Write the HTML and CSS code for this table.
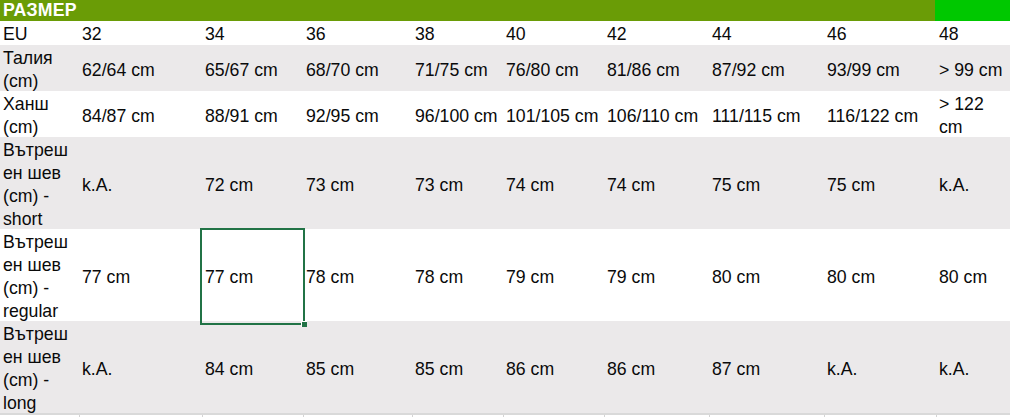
FILE: index.html
```html
<!DOCTYPE html>
<html lang="bg">
<head>
<meta charset="utf-8">
<title>Размер</title>
<link rel="stylesheet" href="styles.css">
</head>
<body>
<div class="sheet">
  <div class="row head">
    <div class="hcell title">РАЗМЕР</div>
    <div class="hcell accent"></div>
  </div>
  <div class="row eu">
    <div class="cell">EU</div><div class="cell">32</div><div class="cell">34</div><div class="cell">36</div><div class="cell">38</div><div class="cell">40</div><div class="cell">42</div><div class="cell">44</div><div class="cell">46</div><div class="cell">48</div>
  </div>
  <div class="row grey two">
    <div class="cell">Талия<br>(cm)</div><div class="cell">62/64 cm</div><div class="cell">65/67 cm</div><div class="cell">68/70 cm</div><div class="cell">71/75 cm</div><div class="cell">76/80 cm</div><div class="cell">81/86 cm</div><div class="cell">87/92 cm</div><div class="cell">93/99 cm</div><div class="cell">&gt; 99 cm</div>
  </div>
  <div class="row two">
    <div class="cell">Ханш<br>(cm)</div><div class="cell">84/87 cm</div><div class="cell">88/91 cm</div><div class="cell">92/95 cm</div><div class="cell">96/100 cm</div><div class="cell">101/105 cm</div><div class="cell">106/110 cm</div><div class="cell">111/115 cm</div><div class="cell">116/122 cm</div><div class="cell">&gt; 122<br>cm</div>
  </div>
  <div class="row grey four">
    <div class="cell">Вътреш<br>ен шев<br>(cm) -<br>short</div><div class="cell">k.A.</div><div class="cell">72 cm</div><div class="cell">73 cm</div><div class="cell">73 cm</div><div class="cell">74 cm</div><div class="cell">74 cm</div><div class="cell">75 cm</div><div class="cell">75 cm</div><div class="cell">k.A.</div>
  </div>
  <div class="row four">
    <div class="cell">Вътреш<br>ен шев<br>(cm) -<br>regular</div><div class="cell">77 cm</div><div class="cell selected">77 cm</div><div class="cell">78 cm</div><div class="cell">78 cm</div><div class="cell">79 cm</div><div class="cell">79 cm</div><div class="cell">80 cm</div><div class="cell">80 cm</div><div class="cell">80 cm</div>
  </div>
  <div class="row grey four last">
    <div class="cell">Вътреш<br>ен шев<br>(cm) -<br>long</div><div class="cell">k.A.</div><div class="cell">84 cm</div><div class="cell">85 cm</div><div class="cell">85 cm</div><div class="cell">86 cm</div><div class="cell">86 cm</div><div class="cell">87 cm</div><div class="cell">k.A.</div><div class="cell">k.A.</div>
  </div>
  <div class="row tail">
    <div class="gcell"></div><div class="gcell"></div><div class="gcell"></div><div class="gcell"></div><div class="gcell"></div><div class="gcell"></div><div class="gcell"></div><div class="gcell"></div><div class="gcell"></div><div class="gcell"></div>
  </div>
</div>
</body>
</html>
```

FILE: styles.css
```css
html, body {
  margin: 0;
  padding: 0;
  background: #ffffff;
}

.sheet {
  width: 1010px;
  font-family: "Liberation Sans", Arial, sans-serif;
  font-size: 17.7px;
  line-height: 23px;
  color: #0a0a0a;
}

.row {
  display: grid;
  grid-template-columns: 79px 123px 101px 109px 91px 101px 105px 115px 112px 74px;
  background: #ffffff;
}

.row.grey {
  background: #ebe9ea;
}

.head {
  grid-template-columns: 935px 75px;
  height: 21px;
  background: #6a9c06;
}

.hcell.title {
  color: #ffffff;
  font-weight: bold;
  line-height: 21px;
  padding-left: 3px;
  letter-spacing: 0.2px;
}

.hcell.accent {
  background: #00c800;
}

.cell {
  display: flex;
  align-items: center;
  padding: 2px 3px 0 3px;
  white-space: nowrap;
  position: relative;
}

.eu { height: 24px; }
.eu .cell { align-items: flex-end; padding: 0 3px 0 3px; margin-bottom: -1px; }
.two { height: 46px; }
.four { height: 92px; }
.last { height: 92px; }

.selected::before {
  content: "";
  position: absolute;
  left: -2px;
  top: -1px;
  right: -2px;
  bottom: -2px;
  border: 2px solid #217346;
}

.selected::after {
  content: "";
  position: absolute;
  right: -4px;
  bottom: -4px;
  width: 5px;
  height: 5px;
  background: #217346;
  border: 1px solid #ffffff;
  border-right: none;
  border-bottom: none;
}

.tail {
  height: 4px;
  border-top: 2px solid #d9d9d9;
  box-sizing: content-box;
}

.gcell {
  border-left: 1px solid #d4d4d4;
}

.gcell:first-child {
  border-left: none;
}
```
